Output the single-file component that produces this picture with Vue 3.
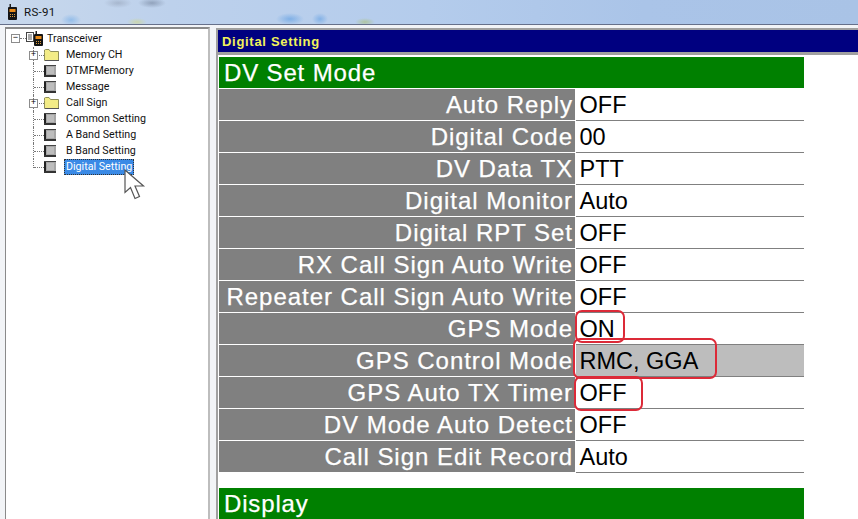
<script setup>
const tree = [
  { label: 'Memory CH', icon: 'folder', plus: true },
  { label: 'DTMFMemory', icon: 'page' },
  { label: 'Message', icon: 'page' },
  { label: 'Call Sign', icon: 'folder', plus: true },
  { label: 'Common Setting', icon: 'page' },
  { label: 'A Band Setting', icon: 'page' },
  { label: 'B Band Setting', icon: 'page' },
  { label: 'Digital Setting', icon: 'page', selected: true },
]
const rows = [
  ['Auto Reply', 'OFF'],
  ['Digital Code', '00'],
  ['DV Data TX', 'PTT'],
  ['Digital Monitor', 'Auto'],
  ['Digital RPT Set', 'OFF'],
  ['RX Call Sign Auto Write', 'OFF'],
  ['Repeater Call Sign Auto Write', 'OFF'],
  ['GPS Mode', 'ON', 'on'],
  ['GPS Control Mode', 'RMC, GGA', 'rmc'],
  ['GPS Auto TX Timer', 'OFF', 'timer'],
  ['DV Mode Auto Detect', 'OFF'],
  ['Call Sign Edit Record', 'Auto'],
]
</script>

<template>
  <div class="window">
    <header class="titlebar">
      <svg class="radio" width="9" height="16" viewBox="0 0 9 16">
        <rect x="1.500" y="0" width="1.500" height="4" fill="#222" />
        <rect x="0" y="3" width="9" height="13" rx="1" fill="#141414" />
        <rect x="1.500" y="5" width="6" height="3" fill="#e88a18" />
        <path d="M2 10h1v1H2zM4 10h1v1H4zM6 10h1v1H6zM2 12h1v1H2zM4 12h1v1H4zM6 12h1v1H6z" fill="#d99a3a" />
      </svg>
      <span class="app-name">RS-91</span>
    </header>
    <div class="frame">
      <aside class="tree">
        <div class="root">
          <span class="box">−</span>
          <span class="hdots"></span>
          <svg width="17" height="15" viewBox="0 0 17 15">
            <rect x="0.500" y="1.500" width="7" height="9" fill="#fff" stroke="#444" />
            <path d="M2 4h4M2 6h4M2 8h4" stroke="#555" />
            <rect x="9.500" y="0" width="1.500" height="4" fill="#222" />
            <rect x="8" y="3" width="9" height="12" rx="1" fill="#141414" />
            <rect x="9.500" y="5" width="6" height="3" fill="#e88a18" />
            <path d="M10 10h1v1h-1zM12 10h1v1h-1zM14 10h1v1h-1zM10 12h1v1h-1zM12 12h1v1h-1zM14 12h1v1h-1z" fill="#d99a3a" />
          </svg>
          <span class="root-label">Transceiver</span>
        </div>
        <ul class="nodes">
          <li v-for="n in tree" :key="n.label" class="node">
            <span class="twig">
              <span v-if="n.plus" class="box plus">+</span>
            </span>
            <span class="icon-slot">
              <svg v-if="n.icon === 'folder'" width="15" height="12" viewBox="0 0 15 12">
                <path d="M0.500 3.500V1l1-.5h3.500l1.500 2h8v9h-14z" fill="#f3ec86" stroke="#8f8f5a" />
                <path d="M1 11h14v1H1z" fill="#555" />
              </svg>
              <svg v-else width="12" height="12" viewBox="0 0 12 12">
                <rect width="12" height="12" fill="#a6a6a6" />
                <rect x="3" y="2" width="7" height="7" fill="#bdbdbd" />
                <rect width="2" height="12" fill="#222" />
                <rect y="10" width="12" height="2" fill="#333" />
                <rect width="12" height="1" fill="#444" />
              </svg>
            </span>
            <span class="node-label" :class="{ selected: n.selected }">{{ n.label }}</span>
          </li>
        </ul>
        <svg class="cursor" width="22" height="32" viewBox="0 0 22 32">
          <path d="M1 1V23.500L6.500 18.500L11 29.500L15.500 27.500L11 17H19.500Z" fill="#fff" stroke="#555" stroke-width="1.200" />
        </svg>
      </aside>
      <main class="pane">
        <div class="caption">Digital Setting</div>
        <div class="sheet">
          <h2 class="section">DV Set Mode</h2>
          <div v-for="r in rows" :key="r[0]" class="row">
            <div class="name">{{ r[0] }}</div>
            <div class="value" :class="{ shaded: r[2] === 'rmc' }">
              <span>{{ r[1] }}</span>
              <i v-if="r[2]" class="mark" :class="r[2]"></i>
            </div>
          </div>
          <h2 class="section second">Display</h2>
        </div>
      </main>
    </div>
  </div>
</template>

<style>
html, body { margin: 0; overflow: hidden; background: #fff; }
</style>

<style scoped>
.window {
  width: 858px;
  height: 519px;
  overflow: hidden;
  display: flex;
  flex-direction: column;
  font-family: "Liberation Sans", Arial, sans-serif;
}
.titlebar {
  height: 24px;
  flex: none;
  display: flex;
  align-items: center;
  gap: 7px;
  padding-left: 8px;
  box-sizing: border-box;
  background:
    radial-gradient(ellipse 14px 5px at 118px 3px, rgba(120, 130, 150, 0.35), transparent),
    radial-gradient(ellipse 14px 5px at 152px 3px, rgba(100, 115, 140, 0.5), transparent),
    radial-gradient(ellipse 10px 6px at 71px 20px, rgba(90, 160, 230, 0.45), transparent),
    radial-gradient(ellipse 14px 6px at 290px 19px, rgba(80, 150, 225, 0.55), transparent),
    radial-gradient(ellipse 8px 6px at 320px 19px, rgba(80, 150, 225, 0.5), transparent),
    radial-gradient(ellipse 10px 4px at 137px 22px, rgba(210, 215, 130, 0.6), transparent),
    radial-gradient(ellipse 10px 4px at 365px 22px, rgba(170, 190, 110, 0.6), transparent),
    linear-gradient(90deg, #c8d8ec 0%, #bdd1ec 20%, #b4ccec 50%, #aac4e8 75%, #a9c3e6 100%);
}
.app-name {
  font: 11.500px "Roboto", Tahoma, sans-serif;
  letter-spacing: 0.3px;
  color: #111;
}
.frame {
  flex: 1;
  min-height: 0;
  display: flex;
  gap: 6px;
  padding: 2px 0 0 5px;
  border-top: 1px solid #66708a;
  background: #f2f4f7;
}
.tree {
  position: relative;
  width: 205px;
  flex: none;
  box-sizing: border-box;
  background: #fff;
  border-style: solid;
  border-color: #8a8a8a #bdbdbd #8a8a8a #8a8a8a;
  border-width: 2px 2px 0 1px;
  padding: 1px 0 0 5px;
  font: 10.700px "Roboto", Tahoma, sans-serif;
  color: #111;
}
.root {
  height: 16px;
  display: flex;
  align-items: center;
}
.box {
  display: inline-flex;
  align-items: center;
  justify-content: center;
  flex: none;
  width: 9px;
  height: 9px;
  box-sizing: border-box;
  border: 1px solid #8c8c8c;
  background: #fff;
  font: 9px/1 "Liberation Mono", monospace;
  color: #000;
}
.hdots {
  width: 6px;
  border-top: 1px dotted #777;
}
.root-label { margin-left: 4px; }
.nodes {
  list-style: none;
  margin: 1px 0 0;
  padding: 0 0 0 22px;
}
.node {
  height: 16px;
  display: flex;
  align-items: center;
}
.twig {
  position: relative;
  width: 11px;
  flex: none;
  height: 16px;
  border-left: 1px dotted #777;
  box-sizing: border-box;
}
.twig::after {
  content: "";
  position: absolute;
  left: 0;
  right: 0;
  top: 8px;
  border-top: 1px dotted #777;
}
.node:last-child .twig { height: 9px; align-self: flex-start; }
.plus {
  position: absolute;
  left: -5px;
  top: 4px;
  z-index: 1;
}
.icon-slot {
  width: 20px;
  flex: none;
  display: flex;
  align-items: center;
}
.node-label { padding: 0 2px; line-height: 16px; }
.node-label.selected {
  background: #3a8ae6;
  color: #fff;
  outline: 1px dotted #333;
  outline-offset: -1px;
}
.cursor {
  position: absolute;
  left: 118px;
  top: 140px;
}
.pane {
  flex: 1;
  min-width: 0;
  background: #fff;
  border-top: 2px solid #a0a0a0;
  border-left: 2px solid #a0a0a0;
  margin-top: 1px;
}
.caption {
  height: 22px;
  background: #000080;
  color: #f2f25a;
  font: bold 13px/23px "Liberation Sans", Arial, sans-serif;
  padding-left: 4px;
  letter-spacing: 0.7px;
  box-shadow: 0 3px 0 #a0a0a0;
}
.sheet {
  padding-top: 5px;
  margin-left: 1px;
  width: 585px;
}
.section {
  margin: 0 0 1px;
  height: 31px;
  padding-left: 5px;
  background: #008000;
  color: #fff;
  font: 400 24px/32px "Liberation Sans", Arial, sans-serif;
  letter-spacing: 0.85px;
  -webkit-text-stroke: 0.25px #fff;
}
.section.second {
  margin-top: 15px;
}
.row {
  height: 32px;
  display: flex;
}
.name {
  width: 356px;
  height: 31px;
  flex: none;
  box-sizing: border-box;
  background: #808080;
  color: #fff;
  text-align: right;
  padding-right: 2px;
  font-size: 24px;
  line-height: 32px;
  white-space: nowrap;
  letter-spacing: 0.97px;
  -webkit-text-stroke: 0.25px #fff;
}
.value {
  position: relative;
  flex: 1;
  margin-left: 1px;
  padding-left: 3.500px;
  border-bottom: 1px solid #808080;
  font-size: 23.500px;
  line-height: 32px;
  color: #000;
}
.value.shaded { background: #bdbdbd; }
.mark {
  position: absolute;
  border: 2.500px solid #dc2a38;
  border-radius: 7px;
  box-sizing: border-box;
  pointer-events: none;
}
.mark.on { left: -1px; top: -3px; width: 50px; height: 33px; }
.mark.rmc { left: -3px; top: -7px; width: 144px; height: 41px; }
.mark.timer { left: -2px; top: -1px; width: 69px; height: 35px; }
</style>
